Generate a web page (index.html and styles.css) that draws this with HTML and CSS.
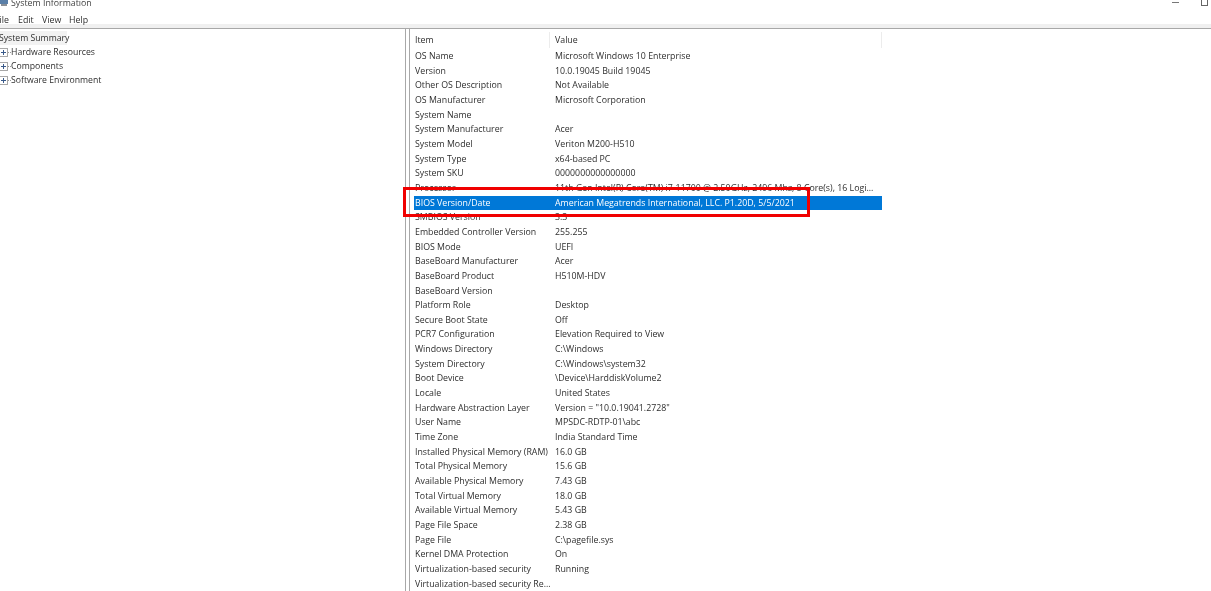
FILE: index.html
```html
<!DOCTYPE html>
<html lang="en">
<head>
<meta charset="utf-8">
<title>System Information</title>
<link rel="stylesheet" href="styles.css">
</head>
<body>
<div class="app">
  <header class="titlebar">
    <div class="title"><svg class="appicon" width="9" height="9" viewBox="0 0 9 9"><rect x="0" y="0" width="8" height="6" fill="#5a7fa8"/><rect x="1" y="6" width="6" height="2" fill="#8a8f96"/></svg><span>System Information</span></div>
    <div class="winbtns"><span class="minbtn"></span><span class="maxbtn"></span></div>
  </header>
  <nav class="menu"><span class="m-file">File</span><span class="m-edit">Edit</span><span class="m-view">View</span><span class="m-help">Help</span></nav>
  <div class="strip"></div>
  <main class="panes">
    <aside class="tree">
      <div class="root">System Summary</div>
      <div class="node"><svg class="plus" width="9" height="9" viewBox="0 0 9 9"><rect x=".5" y=".5" width="8" height="8" fill="#fff" stroke="#a8a8a8"/><path d="M2 4.5h5M4.5 2v5" stroke="#3a5a8a"/></svg><span class="dash"></span>Hardware Resources</div>
      <div class="node"><svg class="plus" width="9" height="9" viewBox="0 0 9 9"><rect x=".5" y=".5" width="8" height="8" fill="#fff" stroke="#a8a8a8"/><path d="M2 4.5h5M4.5 2v5" stroke="#3a5a8a"/></svg><span class="dash"></span>Components</div>
      <div class="node"><svg class="plus" width="9" height="9" viewBox="0 0 9 9"><rect x=".5" y=".5" width="8" height="8" fill="#fff" stroke="#a8a8a8"/><path d="M2 4.5h5M4.5 2v5" stroke="#3a5a8a"/></svg><span class="dash"></span>Software Environment</div>
    </aside>
    <section class="list">
      <div class="row head"><div>Item</div><div>Value</div></div>
      <div class="row"><div>OS Name</div><div>Microsoft Windows 10 Enterprise</div></div>
      <div class="row"><div>Version</div><div>10.0.19045 Build 19045</div></div>
      <div class="row"><div>Other OS Description</div><div>Not Available</div></div>
      <div class="row"><div>OS Manufacturer</div><div>Microsoft Corporation</div></div>
      <div class="row"><div>System Name</div><div></div></div>
      <div class="row"><div>System Manufacturer</div><div>Acer</div></div>
      <div class="row"><div>System Model</div><div>Veriton M200-H510</div></div>
      <div class="row"><div>System Type</div><div>x64-based PC</div></div>
      <div class="row"><div>System SKU</div><div>0000000000000000</div></div>
      <div class="row"><div>Processor</div><div>11th Gen Intel(R) Core(TM) i7-11700 @ 2.50GHz, 2496 Mhz, 8 Core(s), 16 Logi...</div></div>
      <div class="row sel"><div>BIOS Version/Date</div><div>American Megatrends International, LLC. P1.20D, 5/5/2021</div></div>
      <div class="row"><div>SMBIOS Version</div><div>3.3</div></div>
      <div class="row"><div>Embedded Controller Version</div><div>255.255</div></div>
      <div class="row"><div>BIOS Mode</div><div>UEFI</div></div>
      <div class="row"><div>BaseBoard Manufacturer</div><div>Acer</div></div>
      <div class="row"><div>BaseBoard Product</div><div>H510M-HDV</div></div>
      <div class="row"><div>BaseBoard Version</div><div></div></div>
      <div class="row"><div>Platform Role</div><div>Desktop</div></div>
      <div class="row"><div>Secure Boot State</div><div>Off</div></div>
      <div class="row"><div>PCR7 Configuration</div><div>Elevation Required to View</div></div>
      <div class="row"><div>Windows Directory</div><div>C:\Windows</div></div>
      <div class="row"><div>System Directory</div><div>C:\Windows\system32</div></div>
      <div class="row"><div>Boot Device</div><div>\Device\HarddiskVolume2</div></div>
      <div class="row"><div>Locale</div><div>United States</div></div>
      <div class="row"><div>Hardware Abstraction Layer</div><div>Version = "10.0.19041.2728"</div></div>
      <div class="row"><div>User Name</div><div>MPSDC-RDTP-01\abc</div></div>
      <div class="row"><div>Time Zone</div><div>India Standard Time</div></div>
      <div class="row"><div>Installed Physical Memory (RAM)</div><div>16.0 GB</div></div>
      <div class="row"><div>Total Physical Memory</div><div>15.6 GB</div></div>
      <div class="row"><div>Available Physical Memory</div><div>7.43 GB</div></div>
      <div class="row"><div>Total Virtual Memory</div><div>18.0 GB</div></div>
      <div class="row"><div>Available Virtual Memory</div><div>5.43 GB</div></div>
      <div class="row"><div>Page File Space</div><div>2.38 GB</div></div>
      <div class="row"><div>Page File</div><div>C:\pagefile.sys</div></div>
      <div class="row"><div>Kernel DMA Protection</div><div>On</div></div>
      <div class="row"><div>Virtualization-based security</div><div>Running</div></div>
      <div class="row"><div>Virtualization-based security Re...</div><div></div></div>
    </section>
  </main>
  <div class="callout"></div>
</div>
</body>
</html>
```
FILE: styles.css
```css
* { box-sizing: border-box; }
html, body { margin: 0; height: 100%; background: #fff; overflow: hidden; }
.app {
  position: relative;
  width: 1211px;
  height: 591px;
  overflow: hidden;
  font-family: "Open Sans", "Noto Sans", sans-serif;
  font-size: 8.8px;
  color: #2e2e2e;
  filter: blur(0.35px);
}
.titlebar { height: 7px; display: flex; justify-content: space-between; align-items: flex-start; padding-right: 3px; }
.title { display: flex; align-items: center; gap: 2px; height: 7px; line-height: 7px; color: #444; }
.appicon { flex: none; margin-top: -2px; }
.winbtns { display: flex; align-items: flex-start; gap: 22px; height: 7px; }
.minbtn { width: 7px; height: 1px; margin-top: 2px; background: #777; }
.maxbtn { width: 7px; height: 6px; border: 1px solid #666; border-top: 0; }
.menu { height: 18px; display: flex; align-items: center; margin-left: -5px; padding-top: 7px; }
.m-file { width: 23px; }
.m-edit { width: 24px; }
.m-view { width: 27px; }
.strip { height: 4px; background: #f0f0f0; margin-top: -1px; }
.panes { height: 566px; display: flex; border-top: 1px solid #a8a8a8; }
.tree { width: 406px; flex: none; border-right: 1px solid #a8a8a8; padding-top: 2px; font-size: 8.7px; }
.root { width: 68px; height: 14px; margin-left: -1px; line-height: 14px; background: #f2f2f2; white-space: nowrap; }
.node { display: flex; align-items: center; height: 14px; line-height: 14px; white-space: nowrap; }
.plus { flex: none; margin-left: -1px; }
.dash { width: 3px; border-top: 1px dotted #999; }
.list { width: 473px; flex: none; margin-left: 3px; border-left: 1px solid #a8a8a8; padding: 3px 0 0 4px; }
.row { display: grid; grid-template-columns: 136px 1fr; height: 14.67px; line-height: 14.67px; white-space: nowrap; }
.row > div { padding-left: 1px; }
.row > div + div { padding-left: 5px; }
.head { height: 16px; line-height: 16px; border-right: 1px solid #ececec; margin-bottom: 1px; }
.head > div:first-child { border-right: 1px solid #ececec; }
.sel { background: #0078d7; color: #fff; }
.callout {
  position: absolute;
  left: 403px;
  top: 187px;
  width: 407px;
  height: 30px;
  border: 3px solid #f00000;
}
```
